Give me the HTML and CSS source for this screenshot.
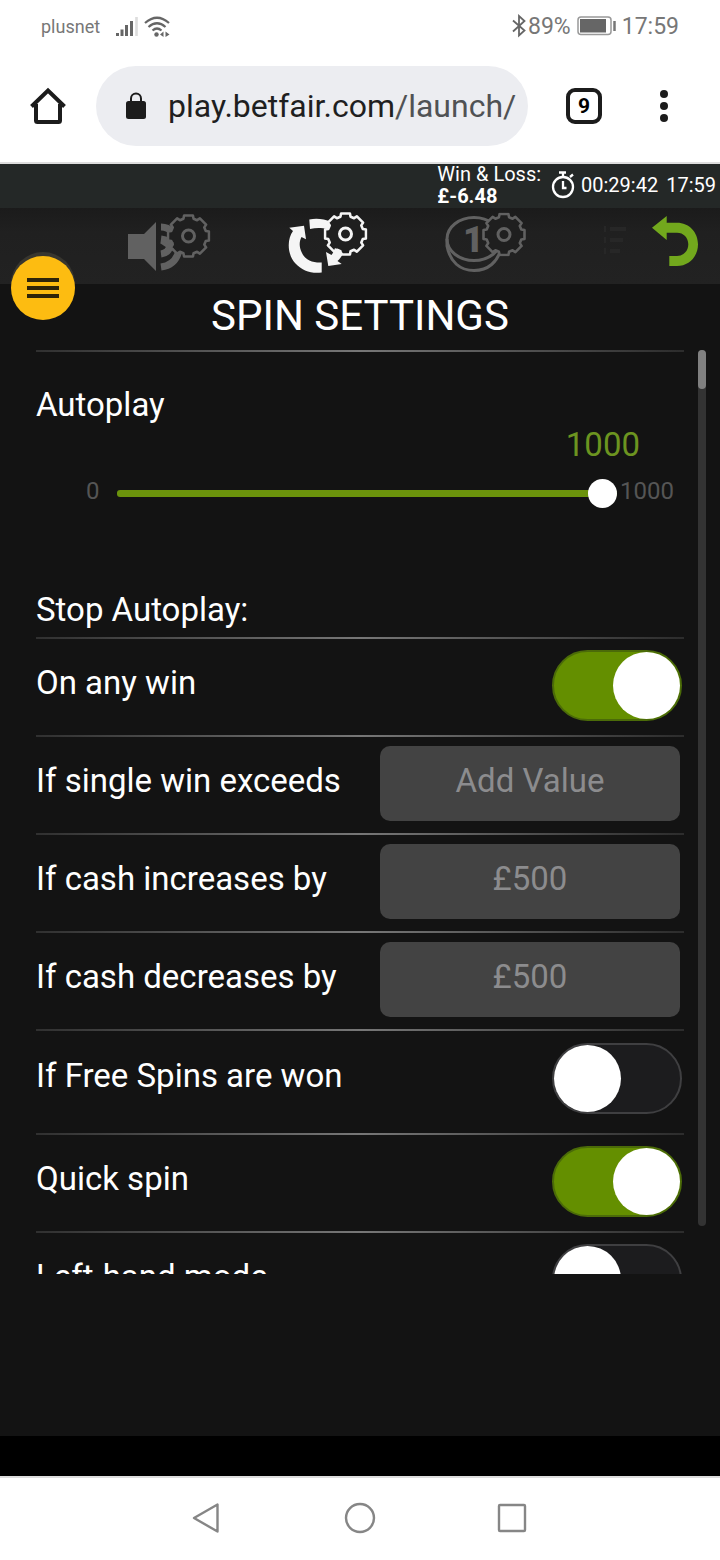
FILE: index.html
```html
<!DOCTYPE html>
<html lang="en">
<head>
<meta charset="utf-8">
<meta name="viewport" content="width=device-width, initial-scale=1">
<title>Spin settings</title>
<link rel="stylesheet" href="styles.css">
</head>
<body>
<svg class="defs" aria-hidden="true">
  <symbol id="gear" viewBox="-22 -22 44 44">
    <path d="M-4.4-20.5H4.4L5.1-17.3 8.6-15.8 11.4-17.6 17.6-11.4 15.8-8.6 17.3-5.1 20.5-4.4V4.4L17.3 5.1 15.8 8.6 17.6 11.4 11.4 17.6 8.6 15.8 5.1 17.3 4.4 20.5H-4.4L-5.1 17.3-8.6 15.8-11.4 17.6-17.6 11.4-15.8 8.6-17.3 5.1-20.5 4.4V-4.4L-17.3-5.1-15.8-8.6-17.6-11.4-11.4-17.6-8.6-15.8-5.1-17.3Z" fill="#1f1f1f" stroke="currentColor" stroke-width="2.6" stroke-linejoin="round"/>
    <circle r="6" fill="none" stroke="currentColor" stroke-width="3"/>
  </symbol>
</svg>

<div class="status">
  <span class="carrier">plusnet</span>
  <svg class="signal" width="22" height="22" viewBox="0 0 22 22" aria-hidden="true">
    <path d="M1.5 18v3M6 14.500v6.500M10.500 10v11M15.500 6v15" stroke="#666" stroke-width="3" fill="none"/>
    <path d="M20.500 2v19" stroke="#ddd" stroke-width="2.600"/>
  </svg>
  <svg class="wifi" width="26" height="22" viewBox="0 0 26 22" aria-hidden="true">
    <g fill="none" stroke="#666" stroke-width="2.200">
      <path d="M1 8Q13-2.500 25 8M4.500 12Q13 4.500 21.500 12M8.500 15.500Q13 11.500 17.500 15.500"/>
    </g>
    <circle cx="12.500" cy="19.500" r="2.200" fill="#666"/>
    <path d="M19.500 16.500v5.500l-3.500-2.500zM21.500 16.500v5.500l4-2.500z" fill="#666"/>
  </svg>
  <svg class="bluetooth" width="14" height="24" viewBox="0 0 14 24" aria-hidden="true">
    <path d="M1 6.500L12.500 16.500 7 21.500V2L12.500 7 1 17.500" fill="none" stroke="#666" stroke-width="1.800"/>
  </svg>
  <span class="charge">89%</span>
  <svg class="battery" width="40" height="20" viewBox="0 0 40 20" aria-hidden="true">
    <rect x="1" y="1" width="33" height="17.500" rx="3" fill="#fff" stroke="#999" stroke-width="1.500"/>
    <path d="M3 3h26v13.500H3z" fill="#666"/>
    <path d="M37.500 5v10" stroke="#777" stroke-width="2.500"/>
  </svg>
  <span class="clock">17:59</span>
</div>

<header class="browser">
  <button class="icon-button" aria-label="Home">
    <svg width="36" height="38" viewBox="0 0 36 38"><path d="M6 17V33.500Q6 35 7.500 35H28.500Q30 35 30 33.500V17M1.500 19.500L18 3.500 34.500 19.500" fill="none" stroke="#1c1c1c" stroke-width="4"/></svg>
  </button>
  <div class="address">
    <svg width="20" height="28" viewBox="0 0 20 28" aria-hidden="true"><rect y="9" width="20" height="18" rx="2.500" fill="#1c1c1c"/><path d="M5 10V6.500a5 5 0 0 1 10 0V10" fill="none" stroke="#1c1c1c" stroke-width="2"/></svg>
    <span class="url">play.betfair.com<span class="path">/launch/</span></span>
  </div>
  <button class="icon-button" aria-label="9 open tabs"><span class="count">9</span></button>
  <button class="icon-button" aria-label="More options">
    <svg width="8" height="34" viewBox="0 0 8 34"><g fill="#1c1c1c"><circle cx="4" cy="5" r="4"/><circle cx="4" cy="17" r="4"/><circle cx="4" cy="29" r="4"/></g></svg>
  </button>
</header>

<main class="game">
  <div class="session">
    <p class="balance">Win &amp; Loss:<br><b>£-6.48</b></p>
    <svg width="24" height="28" viewBox="0 0 24 28" aria-hidden="true"><circle cx="12" cy="16" r="10" fill="none" stroke="#fff" stroke-width="2.300"/><path d="M8 1.500h7M12 2v4M19 6l3-2.500M12 10v7h3.500" fill="none" stroke="#fff" stroke-width="2.300"/></svg>
    <span>00:29:42</span>
    <span>17:59</span>
  </div>

  <nav class="tabs" aria-label="Settings">
    <button class="tab" aria-label="Sound settings">
      <svg width="84" height="76" viewBox="0 0 84 76">
        <path d="M1 26H17L29 14V63L17 51H1Z" fill="currentColor"/>
        <path d="M34 59Q49 57 52 42M34 46Q42 45 43 37Q42 32 34 31M34 19Q41 19 45 24" fill="none" stroke="currentColor" stroke-width="7"/>
        <use href="#gear" x="39.500" y="6" width="44" height="44"/>
        <path d="M34 34L46 42M40 40L46 34" stroke="currentColor" stroke-width="3"/>
      </svg>
    </button>
    <button class="tab selected" aria-label="Spin settings">
      <svg width="84" height="76" viewBox="0 0 84 76">
        <g fill="currentColor">
          <path d="M7 23C1 31 1 46 9 55C16 63 26 66 35.700 64.500V54.500C27 55 19 52 16 45C13 39 13 34 15.500 29L20 31.300 18 17.700 3.300 19.700Z"/>
          <path d="M23.300 11.500C31 10 38 11 45 14L42 21C35 19.500 30 19.500 24 21Z"/>
        </g>
        <use href="#gear" x="37.500" y="4" width="44" height="44"/>
        <path d="M40 44L42.300 58 55.700 56 51.500 53C54 51 56 48 57 45L49 40C48 43 47 45 45.500 47Z" fill="currentColor"/>
      </svg>
    </button>
    <button class="tab" aria-label="Coin settings">
      <svg width="84" height="76" viewBox="0 0 84 76">
        <g fill="none" stroke="currentColor" stroke-width="3">
          <ellipse cx="29" cy="31" rx="27" ry="21.500"/>
          <path d="M2 31V38C5 54 15 62.500 29 62.500C43 62.500 53 54 56 40V31"/>
        </g>
        <text x="18" y="44" class="coin-value">1</text>
        <use href="#gear" x="37" y="4.500" width="44" height="44"/>
      </svg>
    </button>
    <button class="tab faint" aria-label="Game list">
      <svg width="40" height="76" viewBox="4 0 40 76"><path d="M0 18h6v6H0zM0 29h6v6H0zM0 40h6v6H0zM10 19h16v4H10zM10 30h13v4H10zM10 41h10v4H10z" fill="currentColor"/></svg>
    </button>
    <button class="tab back" aria-label="Back">
      <svg width="50" height="76" viewBox="0 0 50 76"><path d="M2 19.700L16.700 8V14.700H27C39 14.700 48 24 48 36.300S39 58 27 58H19.300V48H27C33.500 48 38.300 43 38.300 36.300S33.500 24.700 27 24.700H16.700V32Z" fill="currentColor"/></svg>
    </button>
  </nav>

  <button class="menu" aria-label="Menu"><svg width="32" height="20" viewBox="0 0 32 20"><path d="M0 2h32M0 10h32M0 18h32" stroke="#2e2408" stroke-width="4"/></svg></button>

  <h1 class="title">SPIN SETTINGS</h1>

  <div class="panel">
    <form class="settings">
      <section class="autoplay">
        <label for="spins">Autoplay</label>
        <output class="amount" for="spins">1000</output>
        <div class="range">
          <span>0</span>
          <input type="range" id="spins" class="slider" min="0" max="1000" value="1000">
          <span>1000</span>
        </div>
      </section>
      <h2 class="subtitle">Stop Autoplay:</h2>
      <div class="row"><label for="any-win">On any win</label><input type="checkbox" role="switch" class="switch" id="any-win" checked></div>
      <div class="row"><label for="single-win">If single win exceeds</label><input type="text" class="value" id="single-win" placeholder="Add Value"></div>
      <div class="row"><label for="increase">If cash increases by</label><input type="text" class="value" id="increase" value="£500"></div>
      <div class="row"><label for="decrease">If cash decreases by</label><input type="text" class="value" id="decrease" value="£500"></div>
      <div class="row last"><label for="free-spins">If Free Spins are won</label><input type="checkbox" role="switch" class="switch" id="free-spins"></div>
      <div class="row"><label for="quick">Quick spin</label><input type="checkbox" role="switch" class="switch" id="quick" checked></div>
      <div class="row"><label for="left-hand">Left-hand mode</label><input type="checkbox" role="switch" class="switch" id="left-hand"></div>
    </form>
    <div class="scrollbar"><div class="scroll-thumb"></div></div>
  </div>
</main>

<nav class="system" aria-label="System">
  <button class="icon-button" aria-label="Back"><svg width="32" height="32" viewBox="0 0 32 32"><path d="M25.500 2.500V29.500L2 16Z"/></svg></button>
  <button class="icon-button" aria-label="Home"><svg width="32" height="32" viewBox="0 0 32 32"><circle cx="16" cy="16" r="14"/></svg></button>
  <button class="icon-button" aria-label="Recent apps"><svg width="32" height="32" viewBox="0 0 32 32"><rect x="3" y="3" width="26" height="26" rx="1"/></svg></button>
</nav>
</body>
</html>
```
FILE: styles.css
```css
* {
  box-sizing: border-box;
}

body {
  margin: 0;
  height: 100vh;
  display: flex;
  flex-direction: column;
  background: #fff;
  font-family: Roboto, "Liberation Sans", sans-serif;
}

button {
  padding: 0;
  border: 0;
  background: none;
  color: inherit;
  font: inherit;
}

svg {
  display: block;
}

.defs {
  position: absolute;
  width: 0;
  height: 0;
}

.status {
  display: flex;
  align-items: center;
  height: 52px;
  padding: 0 41px;
  color: #777;
}

.carrier {
  font-size: 18px;
}

.signal {
  margin-left: 16px;
}

.wifi {
  margin-left: 6px;
}

.bluetooth {
  margin-left: auto;
}

.charge,
.clock {
  font-size: 23px;
}

.charge {
  margin: 0 6px 0 2px;
}

.clock {
  margin-left: 5px;
}

.browser {
  display: flex;
  align-items: center;
  height: 112px;
  padding: 0 16px 2px 8px;
  border-bottom: 2px solid #ddd;
}

.icon-button {
  display: grid;
  place-items: center;
  width: 80px;
  height: 80px;
}

.address {
  flex: 1;
  min-width: 0;
  display: flex;
  align-items: center;
  gap: 22px;
  height: 80px;
  margin: 0 16px 0 8px;
  padding: 0 12px 0 30px;
  border-radius: 40px;
  background: #ecedf1;
}

.url {
  flex: 1;
  overflow: hidden;
  white-space: nowrap;
  font-size: 32px;
  line-height: 44px;
  color: #1f1f1f;
}

.path {
  color: #505254;
}

.count {
  display: grid;
  place-items: center;
  width: 36px;
  height: 36px;
  border: 4px solid #1c1c1c;
  border-radius: 9px;
  font-size: 21px;
  font-weight: 700;
}

.game {
  position: relative;
  flex: 1;
  min-height: 0;
  display: flex;
  flex-direction: column;
  border-bottom: 40px solid #000;
  background: #131313;
  color: #fff;
}

.session {
  display: flex;
  justify-content: flex-end;
  align-items: center;
  height: 44px;
  padding: 0 4px 3px 0;
  background: #242827;
  font-size: 20px;
  line-height: 22px;
}

.session span {
  margin-left: 8px;
}

.session svg + span {
  margin-left: 6px;
}

.balance {
  margin: 0 10px 0 0;
}

.tabs {
  display: flex;
  height: 76px;
  padding: 0 20px 0 127px;
  background: linear-gradient(#1b1b1b, #202020 24px, #222);
}

.tab {
  margin-right: 75px;
  color: #616161;
}

.tab.selected {
  color: #f5f5f5;
}

.tab.faint {
  margin-right: 0;
  color: #272727;
}

.tab.back {
  margin: 0 0 0 auto;
  color: #72a81d;
}

.coin-value {
  fill: currentColor;
  font-size: 36px;
  font-weight: 900;
}

.menu {
  position: absolute;
  top: 92px;
  left: 11px;
  display: grid;
  place-items: center;
  width: 64px;
  height: 64px;
  border-radius: 50%;
  background: #fdbc11;
  box-shadow: 0 -4px 0 #38362f;
}

.title {
  margin: 0;
  padding-bottom: 2px;
  text-align: center;
  font-size: 42px;
  font-weight: 400;
  line-height: 64px;
}

.panel {
  flex: 1;
  min-height: 0;
  display: flex;
  gap: 14px;
  margin-bottom: 162px;
  padding: 0 14px 0 36px;
  font-size: 33px;
  line-height: 40px;
}

.settings {
  flex: 1;
  overflow: hidden;
}

.autoplay,
.row {
  border-top: 2px solid;
  border-image: linear-gradient(90deg, #303030, #777 50%, #2c2c2c) 1;
}

.autoplay {
  display: flex;
  flex-direction: column;
  height: 240px;
  padding-top: 33px;
}

.amount {
  align-self: flex-end;
  margin-right: 44px;
  color: #6c9420;
}

.range {
  display: flex;
  align-items: center;
  gap: 3px;
  margin-top: 6px;
  padding: 0 10px 0 50px;
  font-size: 24px;
  color: #555;
}

.slider {
  flex: 1;
  min-width: 0;
  height: 29px;
  margin: 4px 0 0 14px;
  appearance: none;
  background: none;
}

.slider::-webkit-slider-runnable-track {
  height: 7px;
  border-radius: 3px;
  background: #6b930c;
}

.slider::-webkit-slider-thumb {
  appearance: none;
  width: 29px;
  height: 29px;
  margin-top: -11px;
  border-radius: 50%;
  background: #fff;
}

.subtitle {
  margin: 0;
  padding-bottom: 7px;
  font-size: inherit;
  font-weight: 400;
}

.row {
  display: flex;
  align-items: center;
  justify-content: space-between;
  height: 98px;
  padding-bottom: 3px;
}

.row.last {
  height: 104px;
  padding-bottom: 8px;
}

.row label {
  padding-bottom: 5px;
  white-space: nowrap;
}

.switch {
  display: flex;
  width: 130px;
  height: 71px;
  margin: 0 2px 0 0;
  border: 2px solid #3f3f41;
  border-radius: 36px;
  appearance: none;
  background: #1c1c1e;
}

.switch::before {
  content: "";
  width: 67px;
  border-radius: 50%;
  background: #fff;
}

.switch:checked {
  justify-content: flex-end;
  border-color: #4b6b08;
  background: #648f00;
}

.value {
  width: 300px;
  height: 75px;
  margin-right: 4px;
  padding: 0 0 6px;
  border: 0;
  border-radius: 10px;
  background: #434343;
  color: #8c8c8e;
  font: inherit;
  text-align: center;
}

.value::placeholder {
  color: inherit;
}

.scrollbar {
  width: 8px;
  margin-bottom: 48px;
  border-radius: 4px;
  background: #333;
}

.scroll-thumb {
  height: 39px;
  border-radius: 4px;
  background: #808080;
}

.system {
  display: flex;
  justify-content: center;
  gap: 72px;
  height: 84px;
  border-top: 2px solid #ddd;
  fill: none;
  stroke: #868686;
  stroke-width: 2.4;
  stroke-linejoin: round;
}
```
